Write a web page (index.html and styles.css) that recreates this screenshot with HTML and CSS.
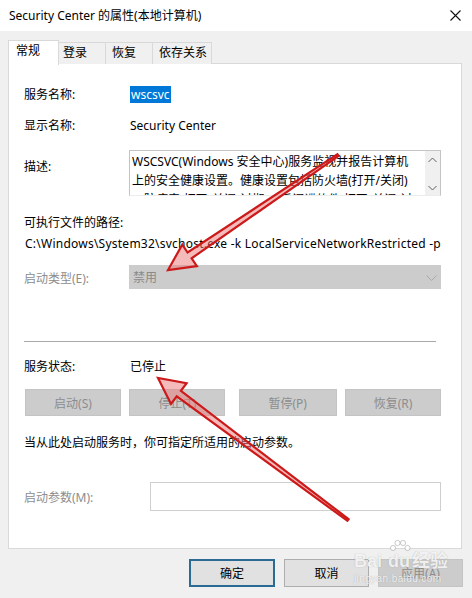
FILE: index.html
```html
<!DOCTYPE html>
<html lang="zh-CN">
<head>
  <meta charset="UTF-8">
  <title>Security Center 的属性(本地计算机)</title>
  <link rel="stylesheet" href="styles.css">
</head>
<body>

  <div class="dialog">
    <div class="titlebar">
      <span class="title">Security Center 的属性(本地计算机)</span>
      <svg class="close" width="11" height="11" viewBox="0 0 11 11">
        <path d="M0.5 0.5L10.5 10.5M10.5 0.5L0.5 10.5" stroke="#111" stroke-width="1.1" fill="none"/>
      </svg>
    </div>

    <div class="tabs">
      <div class="tab active">常规</div>
      <div class="tab t-logon">登录</div>
      <div class="tab t-recover">恢复</div>
      <div class="tab t-deps">依存关系</div>
    </div>

    <div class="panel">
      <div class="row">
        <span class="label">服务名称:</span>
        <span class="value"><span class="selected">wscsvc</span></span>
      </div>
      <div class="row gap-13">
        <span class="label">显示名称:</span>
        <span class="value">Security Center</span>
      </div>
      <div class="row desc gap-15">
        <span class="label">描述:</span>
        <div class="desc-box">
          <div class="desc-text">
            <div>WSCSVC(Windows 安全中心)服务监视并报告计算机</div>
            <div>上的安全健康设置。健康设置包括防火墙(打开/关闭)</div>
            <div>、防病毒(打开/关闭/过期)、反间谍软件(打开/关闭/过</div>
          </div>
          <div class="scroll">
            <svg width="9" height="6" viewBox="0 0 9 6"><path d="M0.5 5L4.5 1L8.5 5" stroke="#606060" fill="none"/></svg>
            <svg width="9" height="6" viewBox="0 0 9 6"><path d="M0.5 1L4.5 5L8.5 1" stroke="#606060" fill="none"/></svg>
          </div>
        </div>
      </div>
      <div class="row gap-18">可执行文件的路径:</div>
      <div class="row path gap-3">C:\Windows\System32\svchost.exe -k LocalServiceNetworkRestricted -p</div>
      <div class="row startup gap-12">
        <span class="label muted">启动类型(E):</span>
        <div class="combo">
          <span>禁用</span>
          <svg width="11" height="6" viewBox="0 0 11 6"><path d="M0.5 0.5L5.5 5.5L10.5 0.5" stroke="#a8a8a8" fill="none"/></svg>
        </div>
      </div>

      <div class="separator"></div>

      <div class="row gap-16">
        <span class="label">服务状态:</span>
        <span class="value">已停止</span>
      </div>
      <div class="service-buttons">
        <button class="btn off">启动(S)</button>
        <button class="btn off">停止(T)</button>
        <button class="btn off wide">暂停(P)</button>
        <button class="btn off">恢复(R)</button>
      </div>
      <div class="row gap-18">当从此处启动服务时，你可指定所适用的启动参数。</div>
      <div class="row params">
        <span class="label muted">启动参数(M):</span>
        <div class="param-input"></div>
      </div>
    </div>

    <div class="actions">
      <button class="btn default">确定</button>
      <button class="btn">取消</button>
      <button class="btn off">应用(A)</button>
    </div>

    <!-- 标注箭头 -->
    <svg class="marks" width="472" height="598" viewBox="0 0 472 598">
      <polygon points="338.6,155.8 191.6,258.3 196.9,266.2 168,270 182.3,244.6 187.6,252.5 337.4,154.2"/>
      <polygon points="348.6,519.2 180.9,390.8 186.6,383.2 158,378 171,404 176.7,396.4 347.4,520.8"/>
    </svg>

    <div class="watermark">
      <svg class="paw" width="22" height="16" viewBox="0 0 22 16">
        <circle cx="4" cy="9" r="2.6"/>
        <circle cx="8.5" cy="4" r="2.6"/>
        <circle cx="14" cy="4" r="2.6"/>
        <circle cx="18.5" cy="9" r="2.6"/>
      </svg>
      <div class="wm-brand">Bai<span class="wm-du">du</span>经验</div>
      <div class="wm-url">jingyan.baidu.com</div>
    </div>
  </div>

</body>
</html>
```

FILE: styles.css
```css
body {
  margin: 0;
  background: #f0f0f0;
  font-family: "Noto Sans", "Noto Sans CJK SC", sans-serif;
  font-size: 12px;
  color: #000;
}

.dialog {
  position: relative;
  width: 472px;
  height: 598px;
  background: #f0f0f0;
  overflow: hidden;
}

.titlebar {
  height: 31px;
  background: #fff;
  display: flex;
  align-items: center;
  justify-content: space-between;
  padding: 0 11px 0 9px;
}
.title {
  line-height: 18px;
}

.tabs {
  display: flex;
  align-items: flex-start;
  margin: 9px 0 0 8px;
  height: 24px;
}
.tab {
  box-sizing: border-box;
  height: 22px;
  margin-top: 2px;
  margin-left: -1px;
  border: 1px solid #d9d9d9;
  border-bottom: none;
  background: #f0f0f0;
  line-height: 20px;
  padding-left: 4px;
}
.tab.active {
  position: relative;
  z-index: 1;
  width: 51px;
  height: 25px;
  margin-top: 0;
  margin-left: 0;
  background: #fff;
  padding: 1px 0 0 7px;
  line-height: 18px;
}
.t-logon { width: 48px; }
.t-recover { width: 48px; padding-left: 6px; }
.t-deps { width: 60px; padding-left: 6px; }

.panel {
  box-sizing: border-box;
  margin: -1px 10px 0 8px;
  height: 486px;
  border: 1px solid #d9d9d9;
  background: #fff;
  padding: 22px 20px 0 15px;
}

.row {
  display: flex;
  align-items: center;
  height: 18px;
  line-height: 18px;
  white-space: nowrap;
}
.gap-3 { margin-top: 3px; }
.gap-12 { margin-top: 12px; }
.gap-13 { margin-top: 13px; }
.gap-15 { margin-top: 15px; }
.gap-16 { margin-top: 16px; }
.gap-18 { margin-top: 18px; }

.label {
  width: 106px;
  flex-shrink: 0;
}
.muted {
  color: #8d8d8d;
}
.selected {
  display: inline-block;
  background: #0078d7;
  color: #fff;
  padding: 0 1px;
  line-height: 17px;
}

.row.desc {
  align-items: flex-start;
  height: 46px;
}
.desc .label {
  width: 105px;
  margin-top: 8px;
}
.desc-box {
  display: flex;
  width: 312px;
  height: 46px;
  box-sizing: border-box;
  border: 1px solid #c4c4c4;
  border-bottom-color: #ececec;
}
.desc-text {
  flex: 1;
  overflow: hidden;
  padding: 1px 0 0 2px;
  line-height: 19px;
}
.scroll {
  width: 15px;
  background: #f0f0f0;
  display: flex;
  flex-direction: column;
  align-items: center;
  justify-content: space-between;
  padding: 6px 0 4px;
  box-sizing: border-box;
}

.path {
  padding-left: 1px;
  letter-spacing: 0.24px;
}

.row.startup {
  height: 24px;
  align-items: flex-start;
}
.startup .label {
  width: 105px;
  margin-top: 5px;
}
.combo {
  box-sizing: border-box;
  width: 312px;
  height: 24px;
  background: #cccccc;
  color: #8a8a8a;
  display: flex;
  align-items: center;
  justify-content: space-between;
  padding: 1px 4px 0 4px;
}

.separator {
  margin-top: 52px;
  width: 412px;
  height: 1px;
  background: #a9a9a9;
}

.service-buttons {
  display: flex;
  justify-content: space-between;
  margin: 13px 0 0 1px;
}

.btn {
  box-sizing: border-box;
  height: 27px;
  width: 96px;
  border: 1px solid #adadad;
  background: #e1e1e1;
  font-family: inherit;
  font-size: 12px;
  color: #000;
  padding: 0;
}
.btn.off {
  background: #cccccc;
  border-color: #c4c4c4;
  color: #8c8c8c;
}
.btn.wide {
  width: 98px;
  margin-left: 5px;
}

.row.params {
  margin-top: 30px;
  height: 29px;
  align-items: flex-start;
}
.params .label {
  width: 126px;
  margin-top: 7px;
}
.param-input {
  box-sizing: border-box;
  width: 291px;
  height: 29px;
  border: 1px solid #cfcfcf;
  background: #fff;
}

.actions {
  display: flex;
  justify-content: flex-end;
  gap: 9px;
  margin-top: 10px;
  padding-right: 9px;
}
.actions .btn {
  height: 28px;
  width: 85px;
}
.actions .btn.default {
  width: 86px;
  border: 2px solid #2a6b95;
}

.marks {
  position: absolute;
  left: 0;
  top: 0;
  pointer-events: none;
}
.marks polygon {
  fill: rgba(235, 120, 120, 0.5);
  stroke: #cc1a1a;
  stroke-width: 2.2;
  stroke-linejoin: miter;
}

.watermark {
  position: absolute;
  left: 354px;
  top: 539px;
  width: 96px;
  color: rgba(255, 255, 255, 0.85);
  text-shadow: 0 0 1px rgba(120, 120, 120, 0.6);
  font-family: "Liberation Sans", "Noto Sans CJK SC", sans-serif;
}
.paw {
  display: block;
  margin-left: 35px;
  fill: rgba(255, 255, 255, 0.85);
  stroke: rgba(150, 150, 150, 0.5);
}
.wm-brand {
  font-size: 18px;
  font-weight: bold;
  line-height: 20px;
  margin-top: -4px;
  white-space: nowrap;
}
.wm-du {
  margin: 0 2px 0 6px;
}
.wm-url {
  font-size: 10px;
  line-height: 12px;
  letter-spacing: 0.4px;
  margin-top: 2px;
}
```
